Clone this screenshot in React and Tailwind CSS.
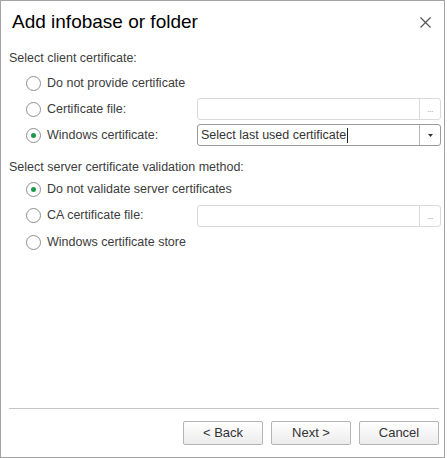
import React from 'react';

const FONT = { fontFamily: '"Liberation Sans", Arial, sans-serif' };

function Radio({ checked }) {
  return (
    <span className="w-[15px] h-[15px] rounded-full border border-[#8e8e8e] bg-white flex items-center justify-center shrink-0">
      {checked && <span className="w-[5px] h-[5px] rounded-full bg-[#1f9a4b]" />}
    </span>
  );
}

function FileInput() {
  return (
    <div className="w-[244px] h-[22px] flex border border-[#dadada] rounded-[3px] bg-white">
      <div className="flex-1" />
      <div className="w-[21px] border-l border-[#dadada] flex items-end justify-center pb-[5px] text-[9px] leading-none text-[#a8a8a8] tracking-[-0.5px]">
        ...
      </div>
    </div>
  );
}

function Combo({ value }) {
  return (
    <div className="w-[244px] h-[22px] flex border border-[#9a9a9a] rounded-[3px] bg-white">
      <div className="flex-1 flex items-center pl-[3px] text-[12.5px] text-[#333]">
        {value}
        <span className="w-px h-[15px] bg-[#222] ml-[1px]" />
      </div>
      <div className="w-[21px] border-l border-[#b5b5b5] flex items-center justify-center pt-[1px]">
        <svg width="5" height="3" viewBox="0 0 5 3">
          <path d="M0 0 L5 0 L2.5 3 Z" fill="#333" />
        </svg>
      </div>
    </div>
  );
}

function Row({ label, checked, h = 'h-[26px]', children }) {
  return (
    <div className={`flex items-center ${h}`}>
      <div className="w-[196px] shrink-0 pl-[25px] flex items-center gap-[6px]">
        <Radio checked={checked} />
        <span className="text-[12.5px] text-[#3c3c3c] whitespace-nowrap">{label}</span>
      </div>
      {children}
    </div>
  );
}

function Button({ children }) {
  return (
    <button className="w-[80px] h-[24px] border border-[#b4b4b4] rounded-[2px] bg-gradient-to-b from-white to-[#ececec] text-[13px] text-[#333]">
      {children}
    </button>
  );
}

export default function App() {
  return (
    <div style={FONT} className="w-[445px] h-[458px] border border-[#a3a3a3] bg-white flex flex-col">
      {/* header */}
      <div className="h-[42px] flex items-center justify-between pl-[11px] pr-[12px]">
        <h1 className="text-[19px] text-black">Add infobase or folder</h1>
        <svg width="11" height="11" viewBox="0 0 11 11" className="mr-[1px]">
          <path d="M0.5 0.5 L10.5 10.5 M10.5 0.5 L0.5 10.5" stroke="#555" strokeWidth="1.2" />
        </svg>
      </div>

      {/* body */}
      <div className="flex-1 pt-[6px]">
        <div className="h-[18px] mb-[3px] flex items-center pl-[8px] text-[12.5px] text-[#3c3c3c]">
          Select client certificate:
        </div>
        <Row label="Do not provide certificate" />
        <Row label="Certificate file:">
          <FileInput />
        </Row>
        <Row label="Windows certificate:" checked>
          <Combo value="Select last used certificate" />
        </Row>

        <div className="h-[18px] mt-[10px] flex items-center pl-[8px] text-[12.5px] text-[#3c3c3c]">
          Select server certificate validation method:
        </div>
        <Row label="Do not validate server certificates" checked />
        <Row label="CA certificate file:" h="h-[27px]">
          <FileInput />
        </Row>
        <Row label="Windows certificate store" />
      </div>

      {/* footer */}
      <div className="ml-[8px] mr-[5px] border-t border-[#c4c4c4] pt-[12px] pb-[12px] flex justify-end gap-[8px]">
        <Button>&lt; Back</Button>
        <Button>Next &gt;</Button>
        <Button>Cancel</Button>
      </div>
    </div>
  );
}
